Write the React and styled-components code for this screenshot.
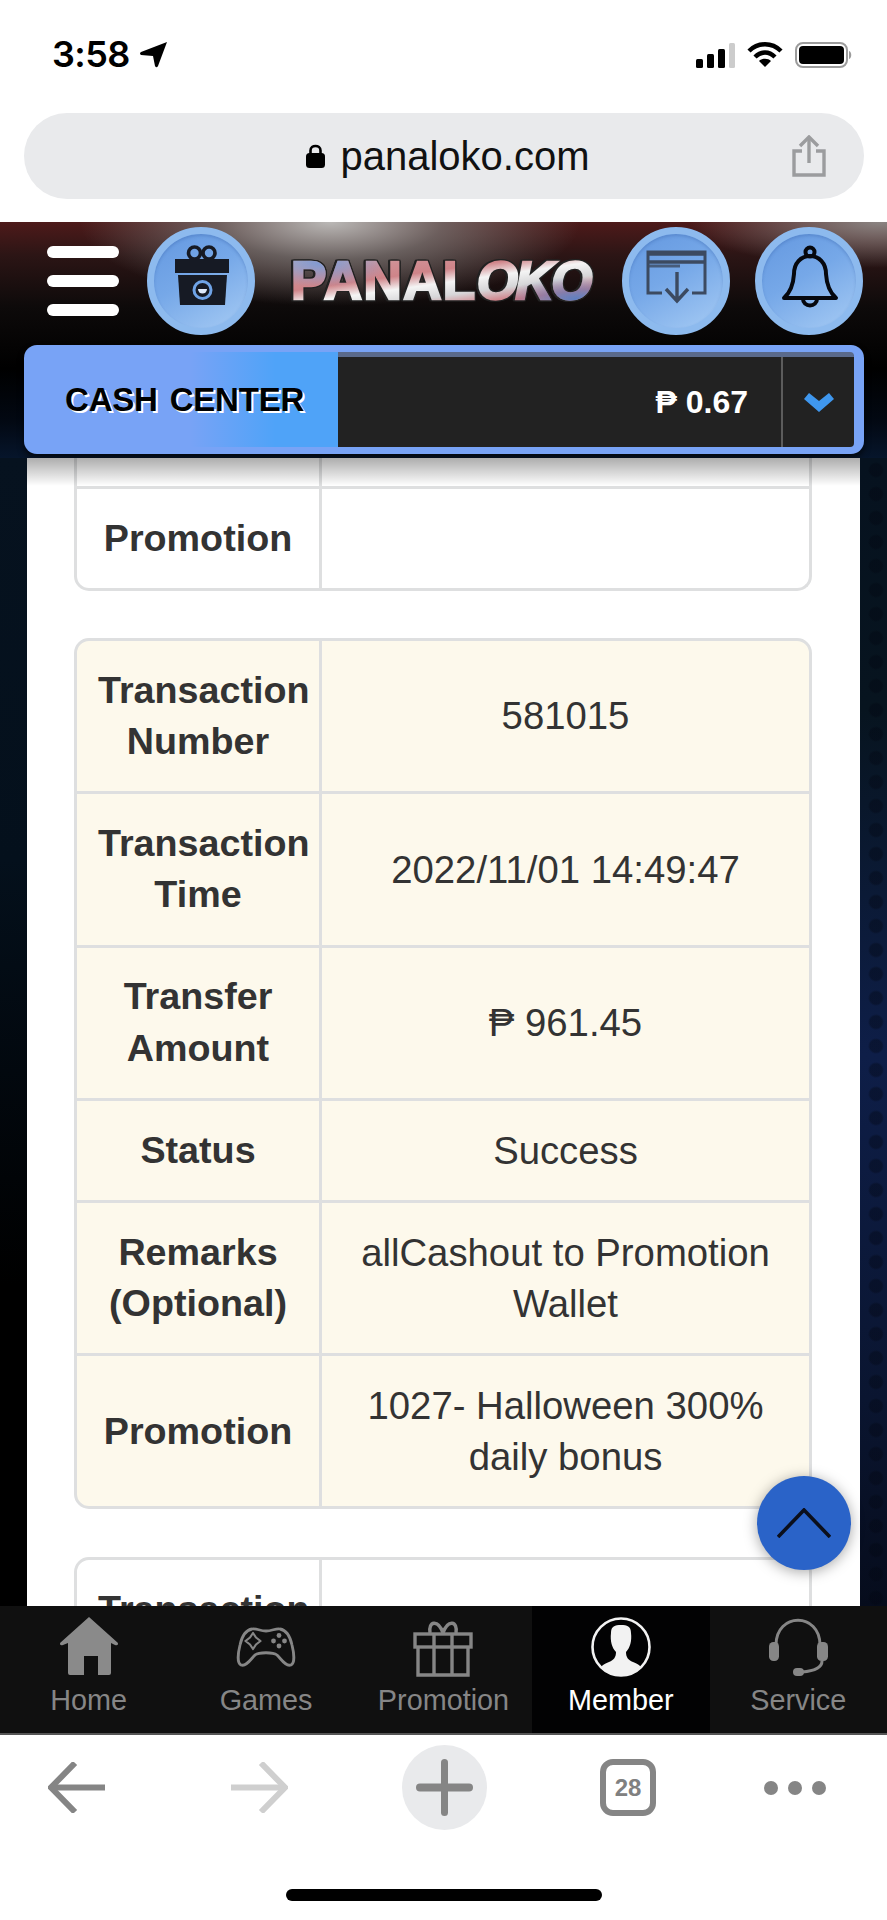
import React from "react";
import styled, { createGlobalStyle } from "styled-components";

const GlobalStyle = createGlobalStyle`
  html, body {
    margin: 0;
    padding: 0;
    background: #fff;
    font-family: "Liberation Sans", Arial, sans-serif;
  }
  * { box-sizing: border-box; }
`;

const Phone = styled.div`
  width: 887px;
  height: 1920px;
  display: flex;
  flex-direction: column;
  overflow: hidden;
  background: #fff;
`;

/* ---------- ios status bar + url bar ---------- */
const StatusBar = styled.div`
  height: 113px;
  padding: 41px 34px 0 52px;
  display: flex;
  justify-content: space-between;
  align-items: flex-start;
`;
const Clock = styled.div`
  display: flex;
  align-items: center;
  gap: 10px;
  font-family: "Inter", sans-serif;
  font-weight: 600;
  font-size: 36px;
  line-height: 27px;
  letter-spacing: -0.6px;
  color: #000;
`;
const StatusIcons = styled.div`
  display: flex;
  align-items: center;
  gap: 12px;
  margin-top: 1px;
`;
const UrlBar = styled.div`
  height: 86px;
  margin: 0 23px 23px 24px;
  padding: 0 37px 0 0;
  border-radius: 43px;
  background: #e9eaec;
  display: flex;
  align-items: center;
`;
const UrlText = styled.div`
  flex: 1;
  display: flex;
  align-items: center;
  justify-content: center;
  gap: 15px;
  padding-left: 81px;
  font-size: 40px;
  color: #111;
`;

/* ---------- site ---------- */
const Site = styled.div`
  flex: 1;
  min-height: 0;
  display: flex;
  flex-direction: column;
`;
const Header = styled.div`
  height: 236px;
  padding-top: 5px;
  background:
    radial-gradient(ellipse 250px 84px at 330px 0, #bab8b6 0%, rgba(125, 122, 120, 0.72) 45%, transparent 100%),
    radial-gradient(ellipse 190px 46px at 880px 0, #8a8482 0%, transparent 100%),
    linear-gradient(180deg, #4e1a1a 0%, #2c1515 14%, #0d0a0a 36%, #000 62%, #020812 84%, #06152b 100%);
`;
const HeaderRow = styled.div`
  display: flex;
  align-items: center;
  padding-left: 47px;
  height: 108px;
  margin-bottom: 10px;
`;
const Burger = styled.div`
  width: 72px;
  height: 70px;
  margin-right: 28px;
  display: flex;
  flex-direction: column;
  justify-content: space-between;
  span {
    display: block;
    height: 12px;
    border-radius: 6px;
    background: #fff;
  }
`;
const RoundButton = styled.div`
  width: 108px;
  height: 108px;
  flex: none;
  margin-right: ${(p) => p.$mr || 0}px;
  border-radius: 50%;
  border: 7px solid #8dbaee;
  background: linear-gradient(150deg, #6498e0 0%, #76a8e8 45%, #a6cbf4 100%);
  box-shadow: inset 0 2px 3px rgba(40, 80, 150, 0.25);
  svg {
    display: block;
    margin: -7px;
  }
`;
const Logo = styled.div`
  width: 303px;
  margin-right: 28px;
  font-size: 53px;
  line-height: 52px;
  font-weight: bold;
  letter-spacing: 1.4px;
  white-space: nowrap;
  background:
    radial-gradient(ellipse 70px 24px at 30px 8px, #7f9ad2 0%, rgba(127, 154, 210, 0) 100%),
    radial-gradient(ellipse 70px 22px at 285px 44px, #5f7fc0 0%, rgba(95, 127, 192, 0) 100%),
    linear-gradient(172deg, #c9c3c8 0%, #d08f94 24%, #cf8489 38%, #f4f4f4 52%, #d6d6d8 66%, #d07a82 80%, #a9a2b8 100%);
  -webkit-background-clip: text;
  background-clip: text;
  -webkit-text-fill-color: transparent;
  -webkit-text-stroke: 2.4px transparent;
  filter: drop-shadow(1.5px 0 0 #222) drop-shadow(-1.5px 0 0 #222) drop-shadow(0 1.5px 0 #222) drop-shadow(0 -1px 0 #222);
  em {
    font-style: italic;
    letter-spacing: -2.5px;
  }
`;
const CashBar = styled.div`
  height: 109px;
  margin: 0 23px 0 24px;
  padding: 7px 10px 7px 0;
  display: flex;
  border-radius: 13px;
  background: #78a3f6;
  box-shadow: 0 4px 6px rgba(0, 0, 0, 0.6);
`;
const CashLabel = styled.div`
  width: 314px;
  padding-left: 41px;
  display: flex;
  align-items: center;
  font-size: 33px;
  font-weight: bold;
  letter-spacing: -0.2px;
  word-spacing: 3px;
  color: #000;
  text-shadow: 2px 2px 0 #fff;
  background: linear-gradient(90deg, rgba(79, 163, 248, 0) 0%, rgba(79, 163, 248, 0) 53%, #4fa3f8 80%);
`;
const CashValue = styled.div`
  flex: 1;
  display: flex;
  background: #222;
  border-top: 5px solid #5a6a8c;
  border-radius: 0 4px 4px 0;
`;
const Amount = styled.div`
  width: 443px;
  padding-right: 33px;
  display: flex;
  align-items: center;
  justify-content: flex-end;
  gap: 6px;
  font-size: 32px;
  font-weight: bold;
  color: #fff;
`;
const CashToggle = styled.div`
  flex: 1;
  border-left: 2px solid #5c5c5c;
  display: flex;
  align-items: center;
  justify-content: center;
`;

const Content = styled.div`
  flex: 1;
  min-height: 0;
  display: flex;
  padding: 0 27px;
  position: relative;
  background:
    linear-gradient(180deg, #06121f 0%, #04101c 35%, #000 72%) 0 0 / 27px 100% no-repeat,
    radial-gradient(circle at 50% 50%, rgba(2, 6, 18, 0.38) 6px, transparent 8px) 0 0 / 24px 24px,
    linear-gradient(180deg, #06121f 0%, #07141f 22%, #0b1a36 38%, #0e1e48 52%, #0a1530 82%, #060c1c 100%);
`;
const Panel = styled.div`
  flex: 1;
  min-width: 0;
  padding: 0 47px;
  background: #fff;
  overflow: hidden;
  position: relative;
`;
const PanelShade = styled.div`
  position: absolute;
  left: 0;
  right: 0;
  top: 0;
  height: 28px;
  background: linear-gradient(180deg, rgba(0, 0, 0, 0.32), rgba(0, 0, 0, 0));
`;
const Table = styled.table`
  width: 738px;
  table-layout: fixed;
  border-collapse: separate;
  border-spacing: 0;
  margin-bottom: ${(p) => (p.$open ? 47 : 48)}px;
  background: ${(p) => (p.$tint ? "#fdf9ec" : "#fff")};
  border: 3px solid #dedfe0;
  border-top-width: ${(p) => (p.$open ? 0 : 3)}px;
  border-radius: ${(p) => (p.$open ? "0 0 15px 15px" : "15px")};
  color: #333;
  line-height: 51.4px;
  text-align: center;
`;
const Head = styled.th`
  width: 242px;
  padding: ${(p) => (p.$stub ? "0" : "23.75px 21px")};
  height: ${(p) => (p.$stub ? "28px" : "auto")};
  font-size: 37.7px;
  font-weight: bold;
  border-top: ${(p) => (p.$first ? 0 : 3)}px solid #dedfe0;
`;
const Cell = styled.td`
  padding: ${(p) => (p.$stub ? "0" : "23.75px 24px")};
  font-size: 38.3px;
  border-left: 3px solid #dedfe0;
  border-top: ${(p) => (p.$first ? 0 : 3)}px solid #dedfe0;
`;
const ScrollTop = styled.div`
  position: absolute;
  left: 757px;
  bottom: 36px;
  width: 94px;
  height: 94px;
  border-radius: 50%;
  background: #2a63c8;
  box-shadow: 0 2px 14px rgba(0, 0, 0, 0.35);
  display: flex;
  align-items: center;
  justify-content: center;
`;

/* ---------- bottom tabs ---------- */
const TabBar = styled.div`
  height: 129px;
  display: grid;
  grid-template-columns: repeat(5, 1fr);
  background: #101010;
  border-bottom: 2px solid #555;
`;
const Tab = styled.div`
  padding-top: 11px;
  display: flex;
  flex-direction: column;
  align-items: center;
  gap: 6px;
  background: ${(p) => (p.$active ? "#020203" : "transparent")};
  color: ${(p) => (p.$active ? "#fff" : "#868686")};
  font-size: 28.8px;
  line-height: 34px;
`;

/* ---------- safari toolbar ---------- */
const Toolbar = styled.div`
  flex: none;
  height: 185px;
  display: flex;
  flex-direction: column;
  background: #fff;
`;
const ToolRow = styled.div`
  height: 95px;
  padding: 10px 0 0 48px;
  display: grid;
  grid-template-columns: 183px 171px 198px 164px 1fr;
  align-items: center;
`;
const PlusButton = styled.div`
  width: 85px;
  height: 85px;
  border-radius: 50%;
  background: #e9eaec;
  display: flex;
  align-items: center;
  justify-content: center;
`;
const TabCount = styled.div`
  width: 56px;
  height: 57px;
  border: 6px solid #858585;
  border-radius: 13px;
  display: flex;
  align-items: center;
  justify-content: center;
  font-size: 24px;
  font-weight: bold;
  color: #808080;
`;
const Dots = styled.div`
  display: flex;
  gap: 10px;
  span {
    width: 14px;
    height: 14px;
    border-radius: 50%;
    background: #858585;
  }
`;
const HomeBar = styled.div`
  width: 316px;
  height: 12px;
  margin: 59px 0 0 286px;
  border-radius: 6px;
  background: #000;
`;

const LocationIcon = () => (
  <svg width="28" height="27" viewBox="0 0 28 27">
    <path d="M27 1 L18 25 Q16.5 27.5 15 25 L13 15 L1 14 Q-1 12.5 1 11 Z" fill="#000" />
  </svg>
);
const SignalIcon = () => (
  <svg width="39" height="25" viewBox="0 0 39 25">
    <rect x="0" y="16" width="7" height="9" rx="1.5" fill="#000" />
    <rect x="11" y="11" width="7" height="14" rx="1.5" fill="#000" />
    <rect x="22" y="6" width="7" height="19" rx="1.5" fill="#000" />
    <rect x="33" y="0" width="6" height="25" rx="1.5" fill="#ccc" />
  </svg>
);
const WifiIcon = () => (
  <svg width="36" height="26" viewBox="0 0 36 26" fill="none" stroke="#000" strokeWidth="4.4">
    <path d="M2 9 C11 0 25 0 34 9" />
    <path d="M8 15 C14 9 22 9 28 15" />
    <path d="M18 25 L12 19 C15 16 21 16 24 19 Z" fill="#000" stroke="none" />
  </svg>
);
const BatteryIcon = () => (
  <svg width="58" height="26" viewBox="0 0 58 26">
    <rect x="1" y="1" width="51" height="24" rx="7" fill="none" stroke="#9c9c9c" strokeWidth="2" />
    <rect x="4" y="4" width="45" height="18" rx="4" fill="#000" />
    <path d="M54 9 C57 10 57 16 54 17 Z" fill="#9c9c9c" />
  </svg>
);
const LockIcon = () => (
  <svg width="19" height="24" viewBox="0 0 19 24">
    <path d="M4.5 10 V6.5 C4.5 0.5 14.5 0.5 14.5 6.5 V10" fill="none" stroke="#000" strokeWidth="2.6" />
    <rect x="0" y="9" width="19" height="15" rx="3.5" fill="#000" />
  </svg>
);
const ShareIcon = () => (
  <svg width="36" height="42" viewBox="0 0 36 42" fill="none" stroke="#9b9c9e" strokeWidth="3.4">
    <path d="M11 16 H3 V40 H33 V16 H25" />
    <path d="M18 28 V3" />
    <path d="M9 11 L18 2 L27 11" />
  </svg>
);

const GiftBadge = () => (
  <svg width="108" height="108" viewBox="0 0 108 108">
    <circle cx="47.5" cy="26" r="6" fill="none" stroke="#161a24" strokeWidth="3.6" />
    <circle cx="62" cy="26" r="6" fill="none" stroke="#161a24" strokeWidth="3.6" />
    <rect x="28" y="32" width="54" height="14" fill="#161a24" />
    <path d="M31 48 H80 L78 78 H33 Z" fill="#161a24" />
    <circle cx="55.5" cy="63" r="8.5" fill="none" stroke="#6fa3e6" strokeWidth="3" />
    <path d="M51 62 A4.5 4.5 0 0 0 60 62 Z" fill="#dfeafa" />
  </svg>
);
const DepositBadge = () => (
  <svg width="108" height="108" viewBox="0 0 108 108" fill="none" stroke="#3c4a60" strokeWidth="3">
    <path d="M40 66 H26 V25 H83 V66 H70" />
    <path d="M26 27 H83 M26 35 H83" strokeWidth="3.4" />
    <path d="M26 39 H58" strokeWidth="3" strokeOpacity="0.8" />
    <path d="M55 45 V74 M44 62 L55 74 L66 62" strokeWidth="3.4" />
  </svg>
);
const BellBadge = () => (
  <svg width="108" height="108" viewBox="0 0 108 108" fill="none" stroke="#06080e" strokeWidth="4" strokeLinejoin="round">
    <circle cx="55" cy="25" r="4.5" />
    <path d="M29 71 Q38 63 39 47 C39 36 46 29 55 29 C64 29 71 36 71 47 Q72 63 81 71 Z" />
    <path d="M48 72 A7 6.5 0 0 0 62 72" />
  </svg>
);

const HomeIcon = () => (
  <svg width="60" height="60" viewBox="0 0 60 60">
    <path
      fill="#8a8a8a"
      fillRule="evenodd"
      d="M30 0 L59 26 Q59.5 29 56 28 L52 26 V56 Q52 58 50 58 H39 V39 H25 V58 H11 Q9 58 9 56 V26 L4 28 Q0.5 29 1 26 Z"
    />
  </svg>
);
const GamesIcon = () => (
  <svg width="60" height="60" viewBox="0 0 60 60" fill="none" stroke="#868686" strokeWidth="2.8">
    <path d="M16 12 C20 11 24 14 30 14 C36 14 40 11 44 12 C50 13 54 19 56 28 C58 36 59 46 55 48 C50 50 46 43 41 38 C37 35 23 35 19 38 C14 43 10 50 5 48 C1 46 2 36 4 28 C6 19 10 13 16 12 Z" />
    <path d="M17 16 L20 20.5 L24.5 24 L20 27.5 L17 32 L14 27.5 L9.5 24 L14 20.5 Z" strokeWidth="2.2" strokeLinejoin="round" />
    <g fill="#868686" stroke="none">
      <circle cx="43" cy="18.5" r="2.4" />
      <circle cx="43" cy="29" r="2.4" />
      <circle cx="37.5" cy="24" r="2.4" />
      <circle cx="48.5" cy="24" r="2.4" />
    </g>
  </svg>
);
const PromoIcon = () => (
  <svg width="60" height="60" viewBox="0 0 60 60" fill="none" stroke="#868686" strokeWidth="3.4">
    <path d="M30 16 C25 2 15 4 17 16 M30 16 C35 2 45 4 43 16" />
    <rect x="2" y="17" width="56" height="13" />
    <path d="M5 30 V58 H55 V30" />
    <path d="M21 17 V58 M39 17 V58" />
  </svg>
);
const MemberIcon = () => (
  <svg width="60" height="60" viewBox="0 0 60 60">
    <ellipse cx="30" cy="30" rx="28.5" ry="28.5" fill="none" stroke="#f2f2f2" strokeWidth="2.6" />
    <path
      fill="#f2f2f2"
      d="M20 16 C20 9 24 8 30 8 C36 8 40 9 40 16 C41 24 39 31 35 35 C35 40 37 43 42 45 C47 47 50 49 50 51 C44 56 37 58 30 58 C23 58 16 56 10 51 C10 49 13 47 18 45 C23 43 25 40 25 35 C21 31 19 24 20 16 Z"
    />
  </svg>
);
const ServiceIcon = () => (
  <svg width="60" height="60" viewBox="0 0 60 60" fill="none" stroke="#868686" strokeWidth="3">
    <path d="M8 28 C8 -5 52 -5 52 28" />
    <rect x="1" y="25" width="10" height="19" rx="4.5" fill="#868686" stroke="none" />
    <rect x="49" y="25" width="11" height="19" rx="4.5" fill="#868686" stroke="none" />
    <path d="M54 44 C54 51 46 54 34 55" />
    <rect x="25" y="51" width="11" height="8" rx="4" fill="#868686" stroke="none" />
  </svg>
);

const Chevron = () => (
  <svg width="30" height="19" viewBox="0 0 30 19">
    <path d="M0 6 L5 0 L15 8 L25 0 L30 6 L15 19 Z" fill="#3f97ee" />
  </svg>
);
const UpChevron = () => (
  <svg width="54" height="30" viewBox="0 0 54 30" fill="none" stroke="#0b0f1c" strokeWidth="3.6">
    <path d="M1 29 L27 2 L53 29" />
  </svg>
);
const BackArrow = ({ color }) => (
  <svg width="57" height="51" viewBox="0 0 57 51" fill="none" stroke={color} strokeWidth="6">
    <path d="M27 1 L3 25.5 L27 50" />
    <path d="M3 25.5 H57" />
  </svg>
);
const ForwardArrow = ({ color }) => (
  <svg width="57" height="51" viewBox="0 0 57 51" fill="none" stroke={color} strokeWidth="6">
    <path d="M30 1 L54 25.5 L30 50" />
    <path d="M0 25.5 H54" />
  </svg>
);
const PlusIcon = () => (
  <svg width="57" height="57" viewBox="0 0 57 57" fill="#858585">
    <rect x="25" y="0" width="7" height="57" rx="3.5" />
    <rect x="0" y="24.5" width="57" height="8" rx="4" />
  </svg>
);

const transaction = [
  ["Transaction Number", "581015"],
  ["Transaction Time", "2022/11/01 14:49:47"],
  ["Transfer Amount", "₱ 961.45"],
  ["Status", "Success"],
  ["Remarks (Optional)", "allCashout to Promotion Wallet"],
  ["Promotion", "1027- Halloween 300% daily bonus"],
];

const tabs = [
  { label: "Home", Icon: HomeIcon },
  { label: "Games", Icon: GamesIcon },
  { label: "Promotion", Icon: PromoIcon },
  { label: "Member", Icon: MemberIcon, active: true },
  { label: "Service", Icon: ServiceIcon },
];

export default function App() {
  return (
    <Phone>
      <GlobalStyle />
      <StatusBar>
        <Clock>
          3:58
          <LocationIcon />
        </Clock>
        <StatusIcons>
          <SignalIcon />
          <WifiIcon />
          <BatteryIcon />
        </StatusIcons>
      </StatusBar>
      <UrlBar>
        <UrlText>
          <LockIcon />
          panaloko.com
        </UrlText>
        <ShareIcon />
      </UrlBar>

      <Site>
        <Header>
          <HeaderRow>
            <Burger>
              <span />
              <span />
              <span />
            </Burger>
            <RoundButton $mr={36}>
              <GiftBadge />
            </RoundButton>
            <Logo>
              PANAL<em>OKO</em>
            </Logo>
            <RoundButton $mr={25}>
              <DepositBadge />
            </RoundButton>
            <RoundButton>
              <BellBadge />
            </RoundButton>
          </HeaderRow>
          <CashBar>
            <CashLabel>CASH CENTER</CashLabel>
            <CashValue>
              <Amount>₱ 0.67</Amount>
              <CashToggle>
                <Chevron />
              </CashToggle>
            </CashValue>
          </CashBar>
        </Header>

        <Content>
          <Panel>
            <PanelShade />
            <Table $open>
              <tbody>
                <tr>
                  <Head $first $stub />
                  <Cell $first $stub />
                </tr>
                <tr>
                  <Head>Promotion</Head>
                  <Cell />
                </tr>
              </tbody>
            </Table>
            <Table $tint>
              <tbody>
                {transaction.map(([label, value], i) => (
                  <tr key={label}>
                    <Head $first={i === 0}>{label}</Head>
                    <Cell $first={i === 0}>{value}</Cell>
                  </tr>
                ))}
              </tbody>
            </Table>
            <Table>
              <tbody>
                <tr>
                  <Head $first>Transaction Number</Head>
                  <Cell $first />
                </tr>
              </tbody>
            </Table>
          </Panel>
          <ScrollTop>
            <UpChevron />
          </ScrollTop>
        </Content>

        <TabBar>
          {tabs.map(({ label, Icon, active }) => (
            <Tab key={label} $active={active}>
              <Icon />
              {label}
            </Tab>
          ))}
        </TabBar>
      </Site>

      <Toolbar>
        <ToolRow>
          <BackArrow color="#858585" />
          <ForwardArrow color="#cfcfcf" />
          <PlusButton>
            <PlusIcon />
          </PlusButton>
          <TabCount>28</TabCount>
          <Dots>
            <span />
            <span />
            <span />
          </Dots>
        </ToolRow>
        <HomeBar />
      </Toolbar>
    </Phone>
  );
}
